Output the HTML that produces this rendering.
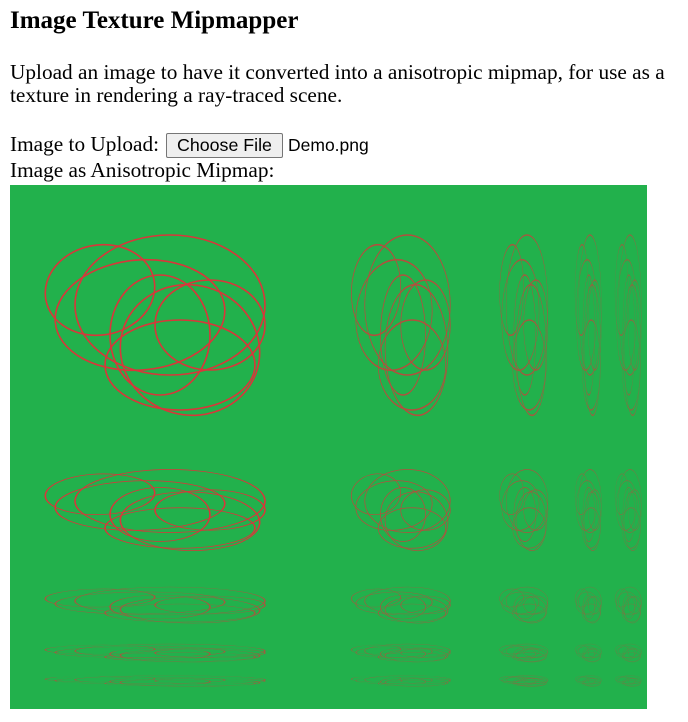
<!DOCTYPE html>
<html><head><style>
body{margin:0;background:#fff;font-family:"Liberation Serif",serif;color:#000;font-size:21.3px;}
.a{position:absolute;white-space:nowrap;}
.btn{position:absolute;left:166px;top:133px;width:117px;height:25px;border:1px solid #767676;border-radius:2px;background:#efefef;font-family:"Liberation Sans",sans-serif;font-size:17.8px;line-height:23px;text-align:center;box-sizing:border-box;}
</style></head><body>
<div class="a" style="left:10px;top:7px;font-size:25px;font-weight:bold;">Image Texture Mipmapper</div>
<div class="a" style="left:10px;top:61px;line-height:23px;">Upload an image to have it converted into a anisotropic mipmap, for use as a<br>texture in rendering a ray-traced scene.</div>
<div class="a" style="left:10px;top:132px;">Image to Upload:</div>
<div class="btn">Choose File</div>
<div class="a" style="left:288px;top:135px;font-family:'Liberation Sans',sans-serif;font-size:17.5px;">Demo.png</div>
<div class="a" style="left:10px;top:158px;">Image as Anisotropic Mipmap:</div>
<svg style="position:absolute;left:10px;top:185px" width="637" height="524">
<rect width="637" height="524" fill="#22b14c"/>
<defs>
<g id="s" fill="none" stroke="#d9363a" stroke-width="1.6">
<ellipse cx="80" cy="65" rx="55" ry="45" transform="rotate(-10 80 65)"/>
<ellipse cx="150" cy="80" rx="95" ry="70"/>
<ellipse cx="170" cy="125" rx="70" ry="65" transform="rotate(15 170 125)"/>
<ellipse cx="140" cy="110" rx="50" ry="60"/>
<ellipse cx="190" cy="100" rx="55" ry="45"/>
<ellipse cx="160" cy="140" rx="75" ry="45"/>
<ellipse cx="120" cy="90" rx="85" ry="55" transform="rotate(-5 120 90)"/>
</g>
</defs>
<g transform="translate(10,40)"><use href="#s"/></g>
<g transform="translate(330,40) scale(0.45,1)" opacity="0.8"><use href="#s"/></g>
<g transform="translate(484,40) scale(0.22,1)" opacity="0.7"><use href="#s"/></g>
<g transform="translate(562,40) scale(0.12,1)" opacity="0.6"><use href="#s"/></g>
<g transform="translate(602,40) scale(0.12,1)" opacity="0.5"><use href="#s"/></g>
<g transform="translate(10,280) scale(1,0.45)"><use href="#s"/></g>
<g transform="translate(330,280) scale(0.45,0.45)" opacity="0.8"><use href="#s"/></g>
<g transform="translate(484,280) scale(0.22,0.45)" opacity="0.7"><use href="#s"/></g>
<g transform="translate(562,280) scale(0.12,0.45)" opacity="0.6"><use href="#s"/></g>
<g transform="translate(602,280) scale(0.12,0.45)" opacity="0.5"><use href="#s"/></g>
<g opacity="0.7">
<g transform="translate(10,400) scale(1,0.2)"><use href="#s"/></g>
<g transform="translate(330,400) scale(0.45,0.2)"><use href="#s"/></g>
<g transform="translate(484,400) scale(0.22,0.2)"><use href="#s"/></g>
<g transform="translate(562,400) scale(0.12,0.2)"><use href="#s"/></g>
<g transform="translate(602,400) scale(0.12,0.2)"><use href="#s"/></g>
<g transform="translate(10,458) scale(1,0.1)"><use href="#s"/></g>
<g transform="translate(330,458) scale(0.45,0.1)"><use href="#s"/></g>
<g transform="translate(484,458) scale(0.22,0.1)"><use href="#s"/></g>
<g transform="translate(562,458) scale(0.12,0.1)"><use href="#s"/></g>
<g transform="translate(602,458) scale(0.12,0.1)"><use href="#s"/></g>
<g transform="translate(10,490) scale(1,0.06)"><use href="#s"/></g>
<g transform="translate(330,490) scale(0.45,0.06)"><use href="#s"/></g>
<g transform="translate(484,490) scale(0.22,0.06)"><use href="#s"/></g>
<g transform="translate(562,490) scale(0.12,0.06)"><use href="#s"/></g>
<g transform="translate(602,490) scale(0.12,0.06)"><use href="#s"/></g>
</g>
</svg>
</body></html>
